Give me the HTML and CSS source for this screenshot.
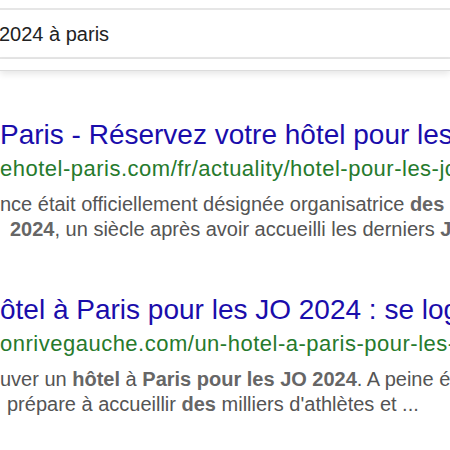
FILE: index.html
```html
<!DOCTYPE html>
<html lang="fr">
<head>
<meta charset="utf-8">
<link rel="stylesheet" href="styles.css">
</head>
<body>
<div class="page">
  <header class="top">
    <div class="searchbox"><span class="query">2024 à paris</span></div>
    <div class="tabs"></div>
  </header>
  <main class="results">
    <div class="result">
      <div class="title">Paris - Réservez votre hôtel pour les JO 2024</div>
      <div class="url">ehotel-paris.com/fr/actuality/hotel-pour-les-jo-2024</div>
      <div class="snippet">
        <div class="line">nce était officiellement désignée organisatrice <b>des</b></div>
        <div class="line indent-a"><b>2024</b>, un siècle après avoir accueilli les derniers <b>JO</b></div>
      </div>
    </div>
    <div class="result">
      <div class="title">ôtel à Paris pour les JO 2024 : se loger</div>
      <div class="url">onrivegauche.com/un-hotel-a-paris-pour-les-jo-2024</div>
      <div class="snippet">
        <div class="line">uver un <b>hôtel</b> à <b>Paris pour les JO 2024</b>. A peine é</div>
        <div class="line indent-b">prépare à accueillir <b>des</b> milliers d'athlètes et ...</div>
      </div>
    </div>
  </main>
</div>
</body>
</html>
```

FILE: styles.css
```css
html, body {
  margin: 0;
  padding: 0;
  background: #fff;
  overflow: hidden;
}
.page {
  width: 450px;
  height: 450px;
  overflow: hidden;
  font-family: "Liberation Sans", Arial, sans-serif;
}
.top {
  padding-top: 8px;
}
.searchbox {
  height: 47px;
  border-top: 2px solid #e6e6e6;
  border-bottom: 2px solid #e6e6e6;
  display: flex;
  align-items: center;
  white-space: nowrap;
}
.query {
  font-size: 20px;
  color: #222;
  padding-top: 2px;
  margin-left: -1px;
}
.tabs {
  height: 11px;
  border-bottom: 1px solid #dcdcdc;
  box-shadow: 0 3px 7px rgba(0, 0, 0, 0.1);
}
.results {
  padding-top: 46px;
  display: flex;
  flex-direction: column;
  gap: 50px;
}
.result {
  white-space: nowrap;
}
.title {
  font-size: 28px;
  line-height: 36px;
  color: #1a0dab;
}
.url {
  font-size: 22px;
  letter-spacing: 0.5px;
  line-height: 24px;
  color: #267a2c;
  margin-top: 4px;
}
.snippet {
  margin-top: 11px;
  font-size: 20px;
  line-height: 25px;
  color: #545454;
}
.snippet b {
  color: #666;
  font-weight: bold;
}
.indent-a {
  padding-left: 10px;
}
.indent-b {
  padding-left: 7px;
}
```
